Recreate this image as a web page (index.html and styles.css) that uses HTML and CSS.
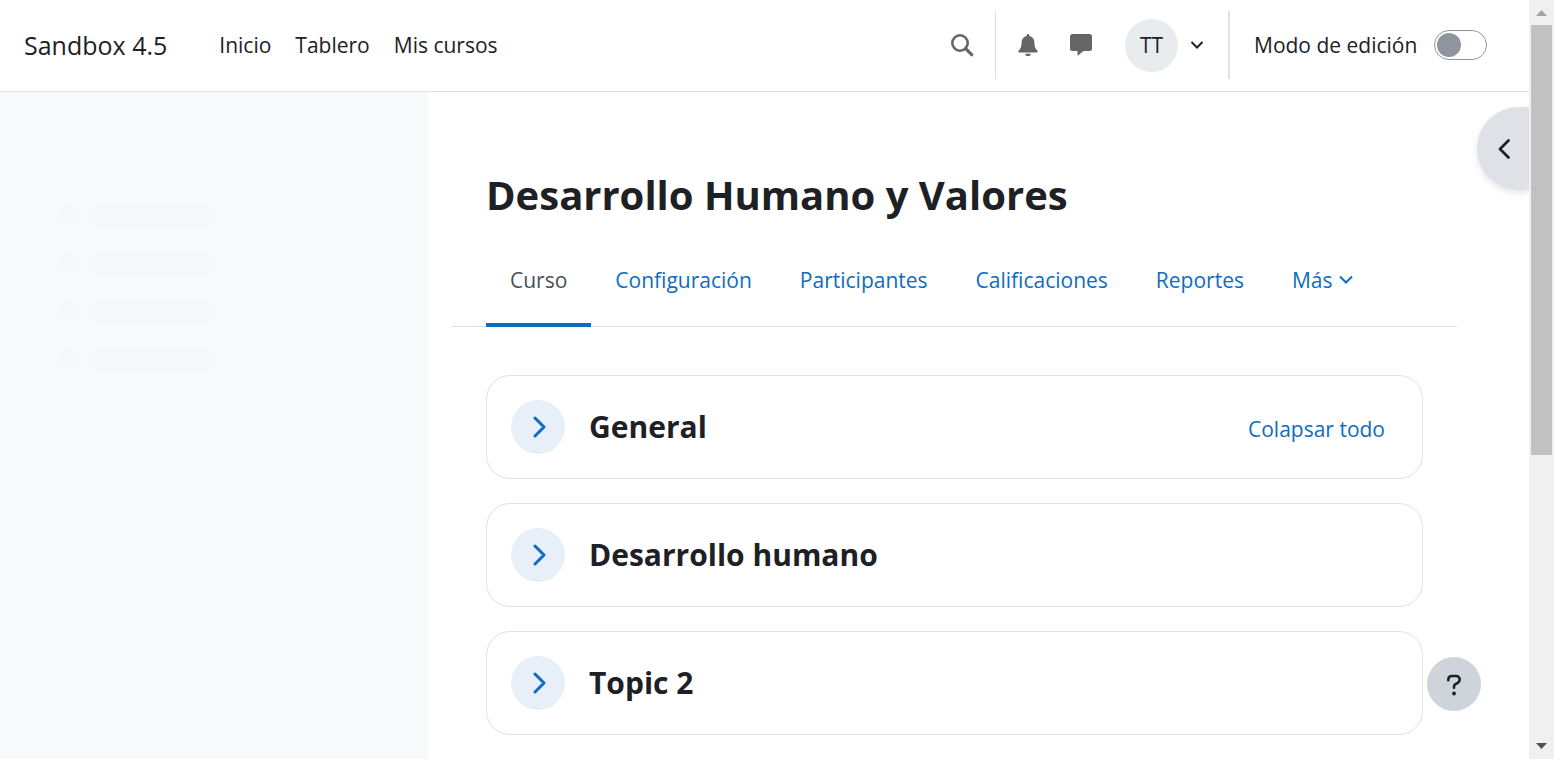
FILE: index.html
```html
<!DOCTYPE html>
<html lang="es">
<head>
<meta charset="utf-8">
<title>Desarrollo Humano y Valores</title>
<link rel="stylesheet" href="styles.css">
</head>
<body class="window">
<div class="page">
  <header class="navbar">
    <a class="brand" href="#">Sandbox 4.5</a>
    <nav class="primary-nav">
      <a href="#">Inicio</a>
      <a href="#">Tablero</a>
      <a href="#">Mis cursos</a>
    </nav>
    <div class="tools">
      <button class="icon-button search" aria-label="Buscar">
        <svg width="24" height="24" viewBox="0 0 24 24"><circle cx="10" cy="10" r="7.7" fill="none" stroke="#666" stroke-width="2.6"/><path d="M15.7 15.7l6 6" stroke="#666" stroke-width="3.2" stroke-linecap="round"/></svg>
      </button>
      <button class="icon-button bell" aria-label="Notificaciones">
        <svg width="22" height="24" viewBox="0 0 22 24"><path fill="#666" d="M11 1c.9 0 1.400.6 1.400 1.500v.6c3 .7 5 3.200 5 6.400 0 4 .9 6 2.900 7.900.9.9.4 2-.8 2h-17c-1.200 0-1.700-1.100-.8-2 2-1.900 2.900-3.900 2.900-7.900 0-3.200 2-5.700 5-6.400v-.6C9.600 1.600 10.100 1 11 1zM8.200 20.700h5.600a2.800 2.300 0 0 1-5.600 0z"/></svg>
      </button>
      <button class="icon-button chat" aria-label="Mensajes">
        <svg width="24" height="24" viewBox="0 0 24 24"><path fill="#666" d="M3.500 1h17A2.500 2.500 0 0 1 23 3.500v12a2.500 2.500 0 0 1-2.500 2.500H14.500l-5.200 4.300c-.5.400-.8.100-.8-.4V18h-5A2.500 2.500 0 0 1 1 15.500v-12A2.500 2.500 0 0 1 3.500 1z"/></svg>
      </button>
      <button class="user-menu" aria-label="Menú de usuario">
        <span class="avatar">TT</span>
        <svg width="14" height="10" viewBox="0 0 14 10"><path d="M1.500 2l5.500 5.500L12.500 2" fill="none" stroke="#1d2125" stroke-width="2"/></svg>
      </button>
      <div class="edit-mode">
        <label for="edit-switch">Modo de edición</label>
        <input id="edit-switch" class="switch" type="checkbox" role="switch">
      </div>
    </div>
  </header>
  <div class="body">
    <aside class="course-index" aria-label="Índice del curso">
      <div class="skeleton"><i></i><b></b></div>
      <div class="skeleton"><i></i><b></b></div>
      <div class="skeleton"><i></i><b></b></div>
      <div class="skeleton"><i></i><b></b></div>
    </aside>
    <main class="main">
      <h1>Desarrollo Humano y Valores</h1>
      <nav class="tabs">
        <a class="active" href="#">Curso</a>
        <a href="#">Configuración</a>
        <a href="#">Participantes</a>
        <a href="#">Calificaciones</a>
        <a href="#">Reportes</a>
        <a href="#">Más <svg width="14" height="10" viewBox="0 0 14 10"><path d="M1 1.500l6 6 6-6" fill="none" stroke="#0f6cbf" stroke-width="2"/></svg></a>
      </nav>
      <div class="sections">
        <section class="card">
          <button class="toggle" aria-label="Expandir General"><svg width="16" height="24" viewBox="0 0 16 24"><path d="M5 3l9 9-9 9" fill="none" stroke="#0f6cbf" stroke-width="3" stroke-linecap="round" stroke-linejoin="round"/></svg></button>
          <h2>General</h2>
          <a class="collapse" href="#">Colapsar todo</a>
        </section>
        <section class="card">
          <button class="toggle" aria-label="Expandir Desarrollo humano"><svg width="16" height="24" viewBox="0 0 16 24"><path d="M5 3l9 9-9 9" fill="none" stroke="#0f6cbf" stroke-width="3" stroke-linecap="round" stroke-linejoin="round"/></svg></button>
          <h2>Desarrollo humano</h2>
        </section>
        <section class="card">
          <button class="toggle" aria-label="Expandir Topic 2"><svg width="16" height="24" viewBox="0 0 16 24"><path d="M5 3l9 9-9 9" fill="none" stroke="#0f6cbf" stroke-width="3" stroke-linecap="round" stroke-linejoin="round"/></svg></button>
          <h2>Topic 2</h2>
        </section>
      </div>
    </main>
  </div>
  <button class="drawer-toggle" aria-label="Abrir cajón de bloques"><svg width="14" height="22" viewBox="0 0 14 22"><path d="M11.500 2.500L3 11l8.500 8.500" fill="none" stroke="#1d2125" stroke-width="2.800" stroke-linecap="round" stroke-linejoin="round"/></svg></button>
  <button class="help" aria-label="Ayuda"><svg width="16" height="24" viewBox="0 0 16 24"><path d="M2.300 8.200V7.500c0-2 1.500-3.500 3.500-3.500h4.400c2 0 3.500 1.600 3.500 3.600 0 1.400-.7 2.500-1.900 3.200l-2.300 1.300c-1 .6-1.500 1.300-1.500 2.400v1.200" fill="none" stroke="#1d2125" stroke-width="2.600" stroke-linecap="round"/><circle cx="8" cy="21.500" r="1.900" fill="#1d2125"/></svg></button>
</div>
<div class="scrollbar" aria-hidden="true">
  <svg class="arrow" width="25" height="25" viewBox="0 0 25 25"><path d="M7 16l5.500-6 5.500 6z" fill="#a3a3a3"/></svg>
  <div class="track"><div class="thumb"></div></div>
  <svg class="arrow" width="25" height="25" viewBox="0 0 25 25"><path d="M7 9l5.500 6L18 9z" fill="#505050"/></svg>
</div>
</body>
</html>
```
FILE: styles.css
```css
* { box-sizing: border-box; }

.window {
  margin: 0;
  display: flex;
  height: 100vh;
  overflow: hidden;
  background: #fff;
  color: #1d2125;
  font: 21px/32px "Open Sans", "Noto Sans", sans-serif;
}

a { color: #0f6cbf; text-decoration: none; }
button { border: 0; padding: 0; background: none; font: inherit; color: inherit; cursor: pointer; }
svg { display: block; }
h1, h2 { margin: 0; }

.page {
  position: relative;
  flex: 1;
  min-width: 0;
  display: flex;
  flex-direction: column;
}

/* Top bar */
.navbar {
  display: flex;
  align-items: center;
  height: 92px;
  padding: 0 42px 1px 24px;
  border-bottom: 1px solid #dee2e6;
}
.navbar a { color: #1d2125; }
.brand { font-size: 25px; margin-right: 52px; }
.primary-nav { display: flex; gap: 24px; }
.tools { display: flex; align-items: center; margin-left: auto; height: 68px; }
.icon-button { display: grid; place-items: center; }
.search { height: 100%; padding-right: 21px; border-right: 1px solid #dee2e6; }
.bell { margin-left: 21px; }
.chat { margin-left: 30px; }
.user-menu { display: flex; align-items: center; gap: 12px; margin: 0 24px 0 32px; }
.avatar {
  display: grid;
  place-items: center;
  width: 53px;
  height: 53px;
  border-radius: 50%;
  background: #e9ecef;
}
.edit-mode {
  display: flex;
  align-items: center;
  gap: 12px;
  height: 100%;
  padding-left: 24px;
  border-left: 2px solid #dee2e6;
}
.edit-mode label { min-width: 168px; }
.switch {
  appearance: none;
  width: 53px;
  height: 30px;
  margin: 0;
  padding: 2px;
  border: 1px solid #8f959e;
  border-radius: 15px;
}
.switch::before {
  content: "";
  display: block;
  width: 24px;
  height: 24px;
  border-radius: 50%;
  background: #8f959e;
}

/* Columns */
.body { display: flex; flex: 1; min-height: 0; }
.course-index {
  display: flex;
  flex-direction: column;
  gap: 24px;
  width: 428px;
  padding: 110px 58px;
  background: #f8f9fb;
}
.skeleton { display: flex; gap: 12px; }
.skeleton i { width: 19px; height: 24px; border-radius: 50%; background: #f7f8fa; }
.skeleton b { width: 124px; height: 24px; background: #f7f8fa; }

.main { flex: 1; min-width: 0; padding: 72px 72px 0 24px; }
.main h1 { padding: 0 34px; font-size: 40px; line-height: 62px; }

/* Course tabs */
.tabs {
  display: flex;
  height: 101px;
  padding: 8px 34px 0;
  border-bottom: 1px solid #dee2e6;
}
.tabs a {
  display: flex;
  align-items: center;
  gap: 6px;
  padding: 2px 24px 0;
  margin-bottom: -1px;
  border-bottom: 4px solid transparent;
}
.tabs .active { color: #495057; border-color: #0f6cbf; }

/* Sections */
.sections { display: flex; flex-direction: column; gap: 24px; padding: 48px 34px 24px; }
.card {
  display: flex;
  align-items: center;
  gap: 24px;
  height: 104px;
  padding: 0 37px 0 24px;
  border: 1px solid #dee2e6;
  border-radius: 24px;
}
.card h2 { font-size: 30px; line-height: 38px; }
.toggle {
  display: grid;
  place-items: center;
  width: 54px;
  height: 54px;
  border-radius: 50%;
  background: #e7f0f9;
}
.collapse { margin-left: auto; padding-top: 3px; }

/* Floating controls */
.drawer-toggle {
  position: absolute;
  top: 107px;
  right: 0;
  display: grid;
  align-items: center;
  width: 52px;
  height: 83px;
  padding-left: 20px;
  border-radius: 42px 0 0 42px;
  background: #dee2e6;
  box-shadow: 0 3px 6px rgba(0, 0, 0, .1);
  clip-path: inset(-12px 0 -12px -12px);
}
.help {
  position: absolute;
  right: 48px;
  bottom: 48px;
  display: grid;
  place-items: center;
  width: 54px;
  height: 54px;
  border-radius: 50%;
  background: #ced4da;
}

/* Window scrollbar */
.scrollbar { display: flex; flex-direction: column; width: 25px; background: #f0f0f0; }
.track { flex: 1; padding: 0 2px; }
.thumb { height: 60.7%; background: #c1c1c1; }
```
